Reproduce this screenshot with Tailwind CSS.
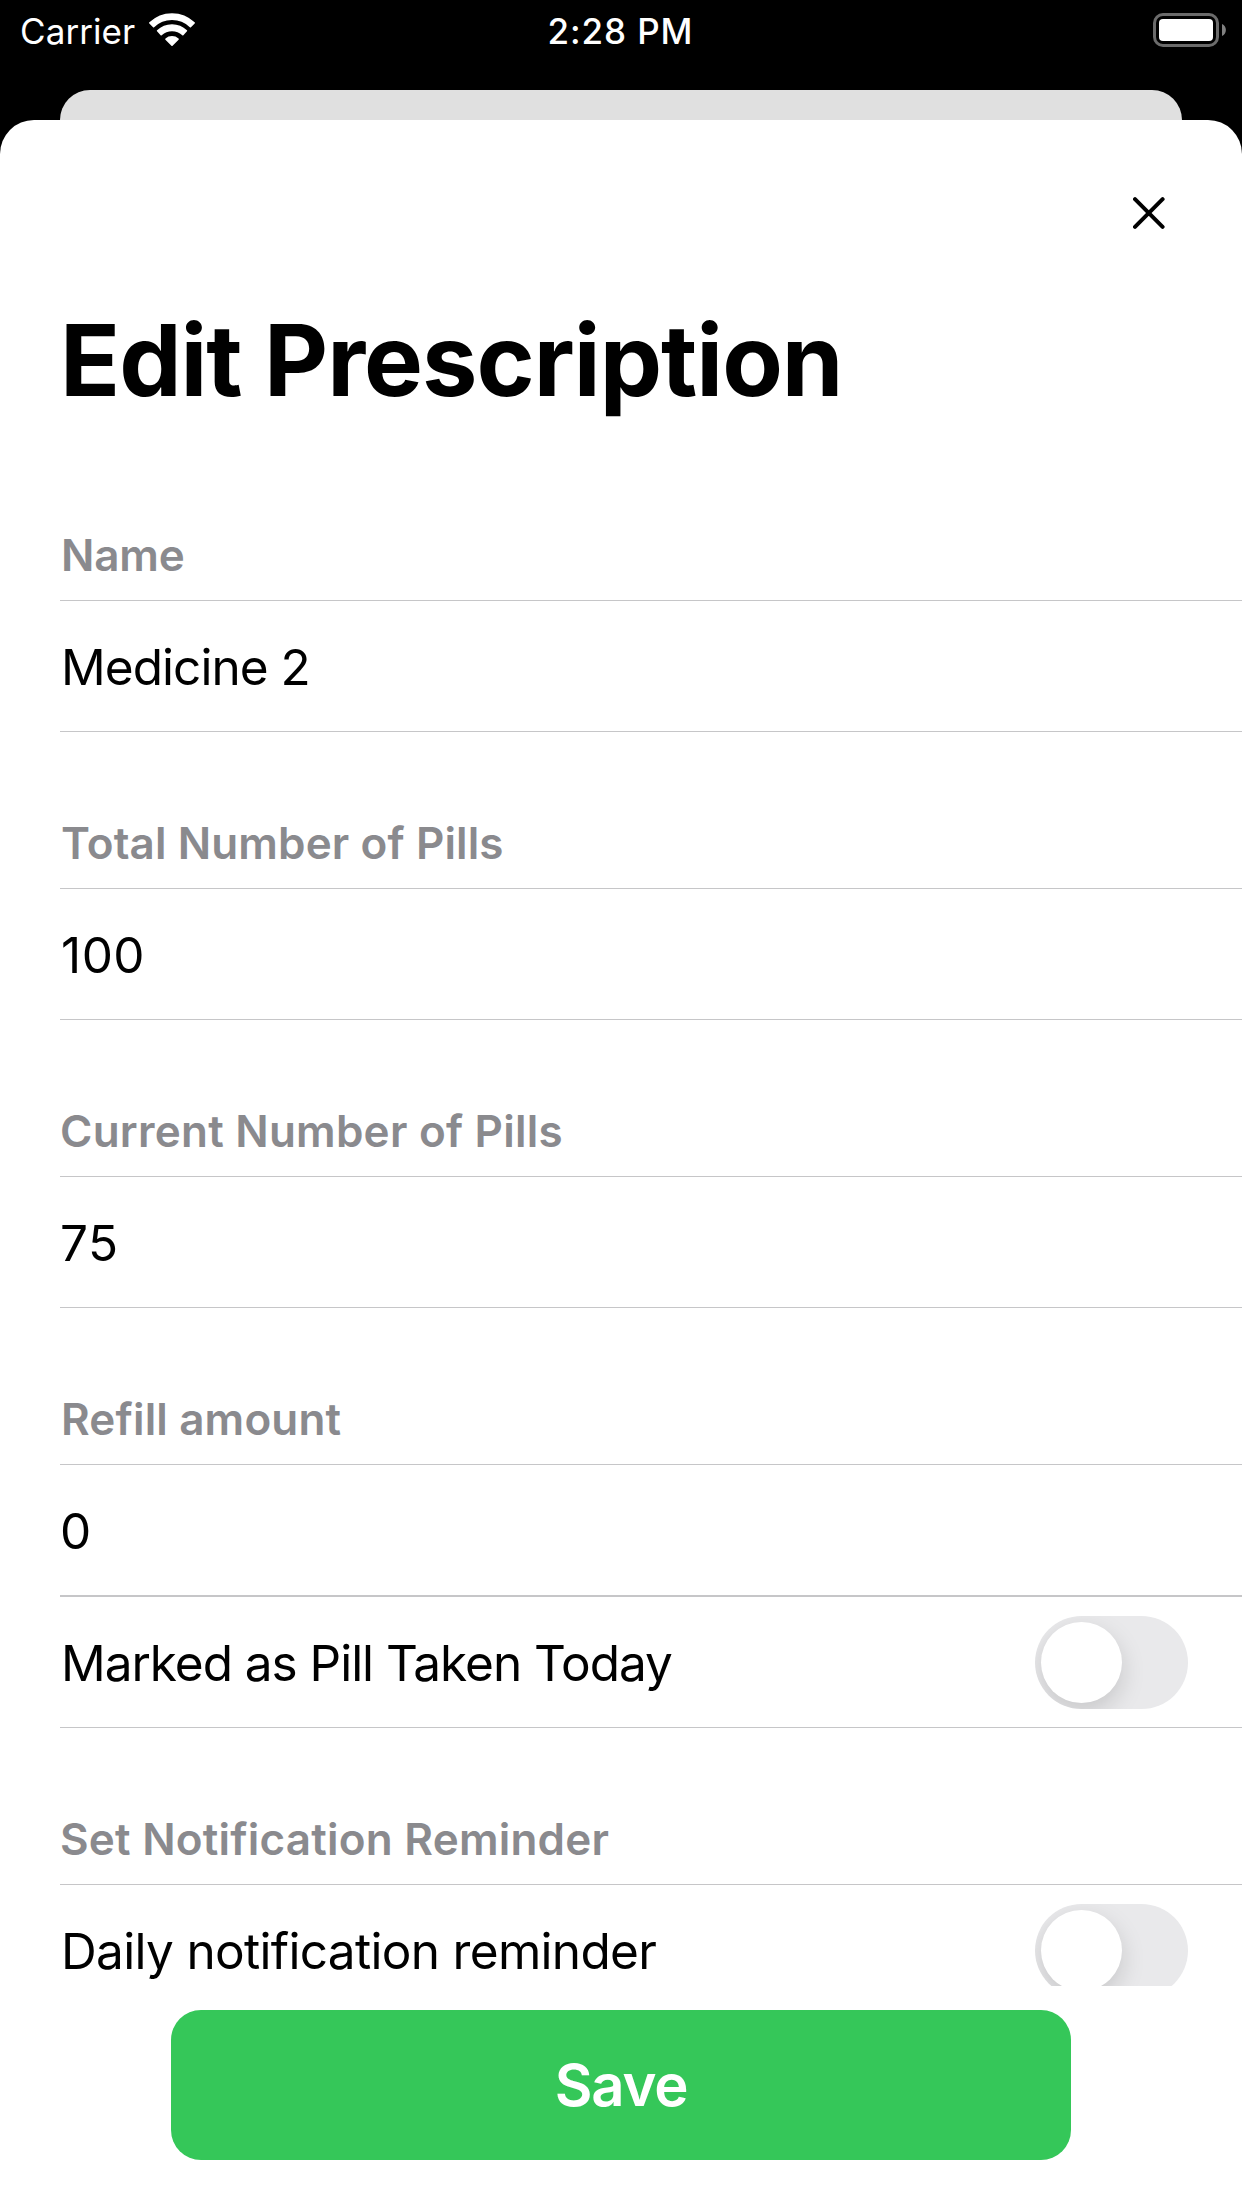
<!DOCTYPE html>
<html lang="en">
<head>
<meta charset="utf-8">
<title>Edit Prescription</title>
<script src="https://cdn.jsdelivr.net/npm/@tailwindcss/browser@4"></script>
</head>
<body class="h-[2208px] w-[1242px] overflow-hidden bg-black font-['Inter',sans-serif] text-black">
<div class="flex h-full flex-col">

  <!-- Status bar -->
  <header class="grid h-[90px] grid-cols-3 items-start text-[35px] leading-[62px] text-white">
    <div class="flex pl-5">
      <span class="tracking-[0.08px]">Carrier</span>
      <svg class="mt-[13px] ml-[14px] h-[33px] w-[46px]" viewBox="0 0 46 33" fill="#fff" stroke="#fff" stroke-width="1.6" stroke-linejoin="round">
        <path d="M.9 9.9A31.8 31.8 0 0 1 45.1 9.9L41.4 13.7A26.6 26.6 0 0 0 4.6 13.7Z"/>
        <path d="M8.6 17.8A20.8 20.8 0 0 1 37.4 17.8L33.8 21.6A16 16 0 0 0 12.2 21.6Z"/>
        <path d="M17 26.2A9 9 0 0 1 29 26.2L23 32.2Z"/>
      </svg>
    </div>
    <div class="pr-px text-center font-[550] tracking-[0.9px]">2:28 PM</div>
    <div class="flex justify-end pt-[13px] pr-4">
      <svg class="h-[34px] w-[73px]" viewBox="0 0 73 34">
        <rect x="1.5" y="1.5" width="63" height="31" rx="8.5" fill="none" stroke="#6b6b6b" stroke-width="3"/>
        <rect x="6" y="6" width="54" height="22" rx="4" fill="#fff"/>
        <path d="M69 11C74.2 13 74.2 21 69 23Z" fill="#808080"/>
      </svg>
    </div>
  </header>

  <!-- Card behind the sheet -->
  <div class="mx-[60px] -mb-5 h-[50px] shrink-0 rounded-t-[30px] bg-[#e0e0e0]"></div>

  <!-- Sheet -->
  <main class="z-10 flex min-h-0 flex-1 flex-col rounded-t-[34px] bg-white">
    <div class="flex h-[180px] shrink-0 items-start justify-end pt-[77px] pr-[77px]">
      <svg class="h-8 w-8" viewBox="0 0 32 32" fill="none" stroke="#000" stroke-width="4" stroke-linecap="round"><path d="M2 2.2 29.6 29.8M29.6 2.2 2 29.8"/></svg>
    </div>
    <h1 class="h-[144px] shrink-0 pl-[60px] text-[99px] leading-[120px] font-bold tracking-[-1px]">Edit Prescription</h1>

    <div class="h-[1542px] shrink-0 overflow-hidden pl-[60px]">
      <section>
        <h2 class="flex h-[156px] items-end pb-[15px] pl-px text-[44px] leading-[60px] font-semibold tracking-[-0.2px] text-[#8a8a8e]">Name</h2>
        <div class="flex h-[132px] items-center border-y border-[#c6c6c8] pt-[2px] pl-px text-[49.5px] tracking-[-0.95px]">Medicine 2</div>
      </section>
      <section>
        <h2 class="flex h-[156px] items-end pb-[15px] pl-px text-[44px] leading-[60px] font-semibold tracking-[0.12px] text-[#8a8a8e]">Total Number of Pills</h2>
        <div class="flex h-[132px] items-center border-y border-[#c6c6c8] pt-[2px] pl-px text-[49.5px] tracking-[0.5px]">100</div>
      </section>
      <section>
        <h2 class="flex h-[156px] items-end pb-[15px] text-[44px] leading-[60px] font-semibold tracking-[0.24px] text-[#8a8a8e]">Current Number of Pills</h2>
        <div class="flex h-[132px] items-center border-y border-[#c6c6c8] pt-[2px] text-[49.5px] tracking-[0.5px]">75</div>
      </section>
      <section>
        <h2 class="flex h-[156px] items-end pb-[15px] pl-px text-[44px] leading-[60px] font-semibold tracking-[0.15px] text-[#8a8a8e]">Refill amount</h2>
        <div class="flex h-[132px] items-center border-y border-[#c6c6c8] pt-[2px] text-[49.5px]">0</div>
        <div class="flex h-[132px] items-center justify-between border-y border-[#c6c6c8] pt-[2px] pr-[54px] pl-px text-[49.5px] tracking-[-1.03px]">
          <span>Marked as Pill Taken Today</span>
          <span class="mb-px flex h-[93px] w-[153px] overflow-hidden rounded-full bg-[#e9e9eb] p-[6px]"><span class="size-[81px] rounded-full bg-white shadow-[0_9px_24px_rgba(0,0,0,0.15)]"></span></span>
        </div>
      </section>
      <section>
        <h2 class="flex h-[156px] items-end pb-[15px] text-[44px] leading-[60px] font-semibold tracking-[0.22px] text-[#8a8a8e]">Set Notification Reminder</h2>
        <div class="flex h-[132px] items-center justify-between border-y border-[#c6c6c8] pt-[2px] pr-[54px] pl-px text-[49.5px] tracking-[-0.68px]">
          <span>Daily notification reminder</span>
          <span class="mb-px flex h-[93px] w-[153px] overflow-hidden rounded-full bg-[#e9e9eb] p-[6px]"><span class="size-[81px] rounded-full bg-white shadow-[0_9px_24px_rgba(0,0,0,0.15)]"></span></span>
        </div>
      </section>
    </div>

    <div class="flex flex-1 items-start justify-center bg-white pt-6">
      <button class="h-[150px] w-[900px] rounded-[30px] bg-[#35c759] text-[58px] leading-[70px] font-semibold tracking-[-1.2px] text-white">Save</button>
    </div>
  </main>
</div>
</body>
</html>
